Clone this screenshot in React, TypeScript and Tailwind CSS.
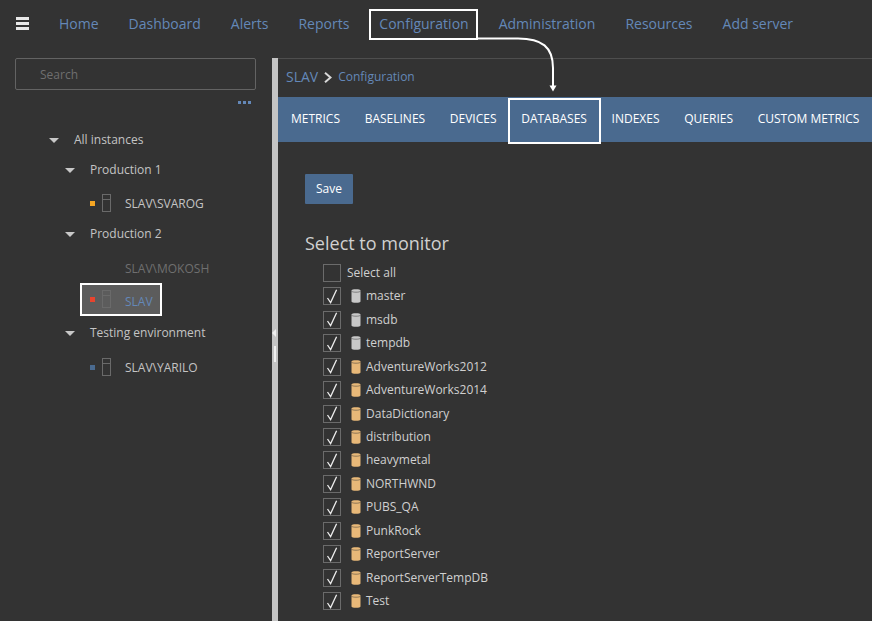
const font = { fontFamily: '"Open Sans", "Noto Sans", sans-serif' };

const navItems = ["Home", "Dashboard", "Alerts", "Reports", "Configuration", "Administration", "Resources", "Add server"];
const tabs = ["METRICS", "BASELINES", "DEVICES", "DATABASES", "INDEXES", "QUERIES", "CUSTOM METRICS"];
const systemDbs = ["master", "msdb", "tempdb"];
const userDbs = [
  "AdventureWorks2012",
  "AdventureWorks2014",
  "DataDictionary",
  "distribution",
  "heavymetal",
  "NORTHWND",
  "PUBS_QA",
  "PunkRock",
  "ReportServer",
  "ReportServerTempDB",
  "Test",
];

function Caret() {
  return <span className="block h-0 w-0 border-x-[5px] border-t-[5px] border-x-transparent border-t-[#c8c8c8]" />;
}

function ServerIcon() {
  return (
    <svg width="10" height="19" viewBox="0 0 10 19" fill="none" stroke="#6a6a6a">
      <rect x="0.5" y="0.5" width="8" height="17" />
      <path d="M0.5 5.5H8.5" />
    </svg>
  );
}

function DbIcon({ color }: { color: string }) {
  return (
    <svg width="10" height="14" viewBox="0 0 10 14">
      <path
        d="M0.5 1.6C0.5 0.7 2.5 0.2 5 0.2S9.5 0.7 9.5 1.6V12.4C9.5 13.3 7.5 13.8 5 13.8S0.5 13.3 0.5 12.4Z"
        fill={color}
      />
      <path d="M0.5 2.2C1.5 3 3.2 3.2 5 3.2S8.5 3 9.5 2.2" fill="none" stroke="#333333" strokeWidth="0.5" />
    </svg>
  );
}

function CheckBox({ checked }: { checked?: boolean }) {
  return (
    <span className="flex h-[18px] w-[18px] shrink-0 items-center justify-center border border-[#6b6b6b]">
      {checked ? (
        <svg width="12" height="15" viewBox="0 0 12 15" fill="none" stroke="#ececec" strokeWidth="1.3">
          <path d="M1.5 9L4.6 13.6L10.6 0.8" />
        </svg>
      ) : null}
    </span>
  );
}

function GroupRow({ label, className }: { label: string; className: string }) {
  return (
    <div className={`flex items-center text-xs text-[#c4c4c4] ${className}`}>
      <span className="flex w-[25px] shrink-0">
        <Caret />
      </span>
      {label}
    </div>
  );
}

function ServerRow({ label, dot, className }: { label: string; dot: string; className: string }) {
  return (
    <div className={`flex items-center text-xs text-[#c4c4c4] ${className}`}>
      <span className={`h-[5px] w-[5px] shrink-0 ${dot}`} />
      <span className="ml-[7px] flex w-[23px] shrink-0">
        <ServerIcon />
      </span>
      {label}
    </div>
  );
}

function DbRow({ name, color }: { name: string; color: string }) {
  return (
    <div className="flex h-[23.47px] items-center">
      <CheckBox checked />
      <span className="ml-[10px] flex w-[15px] shrink-0">
        <DbIcon color={color} />
      </span>
      <span className="text-xs text-[#d0d0d0]">{name}</span>
    </div>
  );
}

export default function App() {
  return (
    <div style={font} className="relative h-[621px] w-[872px] overflow-hidden bg-[#333333]">
      <header className="flex h-[58px] items-start pl-[16px] pt-[13px]">
        <span className="mt-[4px] flex w-[13px] flex-col gap-[2px]">
          <span className="h-[3px] bg-[#e8e8e8]" />
          <span className="h-[3px] bg-[#e8e8e8]" />
          <span className="h-[3px] bg-[#e8e8e8]" />
        </span>
        <nav className="ml-[30px] flex gap-[30px] text-sm leading-[22px] text-[#6488b8]">
          {navItems.map((item) => (
            <a key={item} className="block">
              {item}
            </a>
          ))}
        </nav>
      </header>

      <div className="flex h-[563px]">
        <aside className="w-[272px] shrink-0">
          <div className="ml-[15px] flex h-[32px] w-[241px] items-center rounded-[2px] border border-[#636363] pl-[24px] pt-[2px] text-xs text-[#6f6f6f]">
            Search
          </div>
          <div className="mr-[21px] mt-[11px] flex justify-end gap-[2px]">
            <span className="h-[3px] w-[3px] bg-[#6488b8]" />
            <span className="h-[3px] w-[3px] bg-[#6488b8]" />
            <span className="h-[3px] w-[3px] bg-[#6488b8]" />
          </div>

          <div className="mt-[26px] pl-[49px]">
            <GroupRow label="All instances" className="h-[20px]" />
            <GroupRow label="Production 1" className="mt-[10px] h-[20px] pl-[16px]" />
            <ServerRow label="SLAV\SVAROG" dot="bg-[#f5a623]" className="mt-[13px] h-[21px] pl-[41px]" />
            <GroupRow label="Production 2" className="mt-[10px] h-[20px] pl-[16px]" />
            <div className="mt-[15px] flex h-[20px] items-center pl-[76px] text-xs text-[#6f6f6f]">SLAV\MOKOSH</div>
            <div className="ml-[31px] mt-[4px] flex h-[33px] w-[82px] items-center border-2 border-white bg-[#5c5c5c] pl-[8px] text-xs text-[#6488b8]">
              <span className="h-[5px] w-[5px] shrink-0 bg-[#e8442e]" />
              <span className="ml-[7px] flex w-[23px] shrink-0">
                <ServerIcon />
              </span>
              <span className="pt-[4px]">SLAV</span>
            </div>
            <GroupRow label="Testing environment" className="mt-[7px] h-[20px] pl-[16px]" />
            <ServerRow label="SLAV\YARILO" dot="bg-[#4a6a8f]" className="mt-[14px] h-[21px] pl-[41px]" />
          </div>
        </aside>

        <div className="relative w-[6px] shrink-0 bg-[#c4c4c4]">
          <span className="absolute left-0 top-[271px] h-0 w-0 border-y-[4px] border-r-[4px] border-y-transparent border-r-[#eeeeee]" />
          <span className="absolute left-[2px] top-[288px] h-[16px] w-[2px] bg-[#f0f0f0]" />
        </div>

        <main className="min-w-0 flex-1 border-t border-[#4e4e4e]">
          <div className="flex h-[38px] items-center pb-[2px] pl-[8px] text-[#6488b8]">
            <span className="text-sm">SLAV</span>
            <svg className="ml-[6px] mr-[6px]" width="8" height="11" viewBox="0 0 8 11" fill="none" stroke="#d8d8d8" strokeWidth="2">
              <path d="M1 0.8L6.5 5.5L1 10.2" />
            </svg>
            <span className="text-xs">Configuration</span>
          </div>

          <div className="flex h-[45px] items-center bg-[#4a6a8f] pb-[2px] pl-[13px] text-xs whitespace-nowrap text-white">
            <div className="flex gap-[24.7px]">
              {tabs.map((tab) => (
                <span key={tab} className="relative">
                  {tab}
                  {tab === "DATABASES" ? (
                    <span className="absolute -left-[13px] -right-[14px] -top-[13px] h-[46px] border-2 border-white" />
                  ) : null}
                </span>
              ))}
            </div>
          </div>

          <div className="pl-[27px] pt-[32px]">
            <button className="block h-[30px] w-[48px] rounded-[1px] bg-[#4a6a8f] text-xs text-white">Save</button>
            <h2 className="mt-[25px] text-[18px] leading-[28px] text-[#d0d0d0]">Select to monitor</h2>
            <div className="ml-[18px] mt-[4px]">
              <div className="flex h-[23.47px] items-center">
                <CheckBox />
                <span className="ml-[6px] text-xs text-[#d0d0d0]">Select all</span>
              </div>
              {systemDbs.map((name) => (
                <DbRow key={name} name={name} color="#c8c8c8" />
              ))}
              {userDbs.map((name) => (
                <DbRow key={name} name={name} color="#e8b878" />
              ))}
            </div>
          </div>
        </main>
      </div>

      {/* annotation: box round Configuration and the arrow down to the Databases tab */}
      <span className="absolute left-[369px] top-[9px] h-[31px] w-[109px] border-2 border-white" />
      <svg className="absolute left-[470px] top-[30px]" width="95" height="65" viewBox="0 0 95 65" fill="none">
        <path d="M8 8.5H48C72 8.5 83 17 83 38V57" stroke="#ffffff" strokeWidth="2" />
        <path d="M79.5 55.5H86.5L83 61.5Z" fill="#ffffff" />
      </svg>
    </div>
  );
}
